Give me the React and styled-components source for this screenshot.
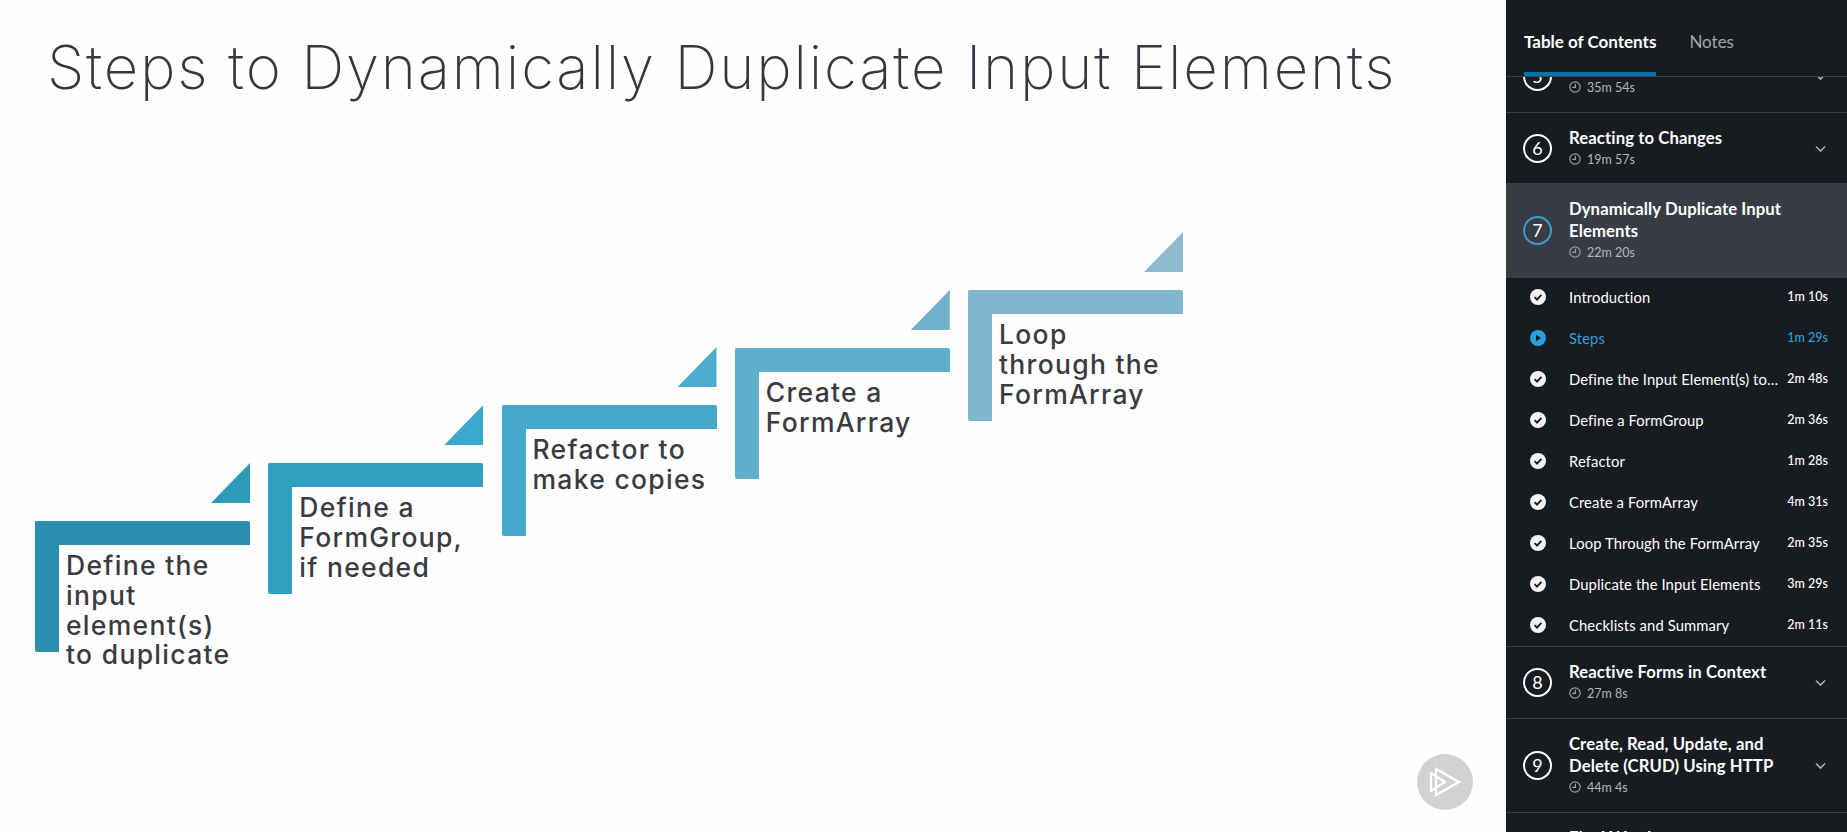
import React from 'react'
import styled, { createGlobalStyle } from 'styled-components'

const GlobalStyle = createGlobalStyle`
	html, body {
		margin: 0;
		padding: 0;
		height: 100%;
		overflow: hidden;
		background: #fff;
	}
`

const Page = styled.div`
	display: flex;
	height: 832px;
	width: 1847px;
	overflow: hidden;
	font-family: "Lato", "Liberation Sans", sans-serif;
`

const Slide = styled.main`
	flex: 1;
	position: relative;
	background: #fefefe;
	padding: 25px 0 0 47px;
`

const SlideTitle = styled.h1`
	margin: 0;
	font-family: "Inter", "Lato", sans-serif;
	font-size: 60px;
	line-height: 84px;
	font-weight: 200;
	letter-spacing: 1.8px;
	color: #33383f;
	white-space: nowrap;
`

const Stairs = styled.div`
	display: flex;
	gap: 18.25px;
	margin: 123px 0 0 -12px;
`

const Step = styled.div`
	width: 215px;
	display: flex;
	flex-direction: column;
	align-items: flex-end;
	margin-top: ${p => p.$lift}px;
`

const Corner = styled.div`
	width: 39px;
	height: 40px;
	margin-bottom: 18px;
	background: ${p => p.$color};
	clip-path: polygon(100% 0, 100% 100%, 0 100%);
`

const Bracket = styled.div`
	width: 100%;
	height: 131px;
	box-sizing: border-box;
	border-top: 24px solid ${p => p.$color};
	border-left: 24px solid ${p => p.$color};
	border-radius: 2px;
`

const StepLabel = styled.p`
	margin: 0;
	padding: 6px 0 0 7px;
	font-family: "Inter", "Lato", sans-serif;
	font-size: 26.5px;
	line-height: 29.8px;
	font-weight: 500;
	letter-spacing: 1.3px;
	color: #3a3b42;
	white-space: pre-line;
`

const PlayBadge = styled.div`
	position: absolute;
	left: 1417px;
	top: 754px;
	width: 56px;
	height: 56px;
	border-radius: 50%;
	background: #d2d2d2;
	display: flex;
	align-items: center;
	justify-content: center;
`

const Sidebar = styled.aside`
	width: 341px;
	height: 832px;
	flex: none;
	display: flex;
	flex-direction: column;
	background: #181b20;
	color: #fff;
`

const Tabs = styled.div`
	flex: none;
	height: 76px;
	display: flex;
	gap: 33px;
	padding-left: 18px;
	border-bottom: 1px solid #3c3f43;
	position: relative;
	z-index: 1;
	background: #181b20;
`

const Tab = styled.div`
	padding-top: 31px;
	height: 41px;
	font-size: 17px;
	line-height: 22px;
	font-weight: ${p => (p.$active ? 700 : 400)};
	color: ${p => (p.$active ? '#fff' : '#a3a5a8')};
	border-bottom: 4px solid ${p => (p.$active ? '#0076ad' : 'transparent')};
`

const Scroller = styled.div`
	flex: 1;
	overflow: hidden;
`

const Inner = styled.div`
	margin-top: -36px;
`

const Section = styled.div`
	display: flex;
	align-items: center;
	padding: ${p => (p.$active ? '15px 0 16px' : '14px 0 15px')};
	margin-top: ${p => (p.$active ? '-2px' : '0')};
	position: relative;
	background: ${p => (p.$active ? '#383d45' : 'transparent')};
	border-bottom: ${p => (p.$active ? 'none' : '1px solid #3c3f43')};
`

const Bullet = styled.div`
	flex: none;
	width: 29px;
	height: 29px;
	margin: 0 17px;
	box-sizing: border-box;
	border: 2.5px solid ${p => (p.$active ? '#3a9fd0' : '#fff')};
	border-radius: 50%;
	display: flex;
	align-items: center;
	justify-content: center;
	font-size: 18px;
	line-height: 1;
`

const SectionBody = styled.div`
	width: 225px;
`

const SectionTitle = styled.div`
	font-size: 16.7px;
	line-height: 22px;
	font-weight: 700;
	letter-spacing: 0.1px;
`

const Meta = styled.div`
	display: flex;
	align-items: center;
	gap: 6px;
	height: 20px;
	font-size: 12.5px;
	color: #b4b6b8;
`

const Chevron = styled.div`
	position: absolute;
	left: 309px;
	top: 50%;
	transform: translateY(-50%);
	display: flex;
`

const Lessons = styled.div`
	margin-top: -2px;
	padding-bottom: 1px;
	border-bottom: 1px solid #3c3f43;
`

const Lesson = styled.div`
	height: 41px;
	display: flex;
	align-items: center;
	padding: 0 19px 0 24px;
	color: ${p => (p.$active ? '#2a9fdb' : '#fff')};
`

const LessonIcon = styled.div`
	flex: none;
	width: 16px;
	height: 16px;
	margin-right: 23px;
	display: flex;
`

const LessonTitle = styled.div`
	flex: 1;
	min-width: 0;
	font-size: 14.8px;
	letter-spacing: 0.1px;
	white-space: nowrap;
	overflow: hidden;
	text-overflow: ellipsis;
`

const LessonTime = styled.div`
	flex: none;
	margin-left: 8px;
	font-size: 12.5px;
	font-weight: 500;
`

const ClockIcon = () => (
	<svg width="12" height="12" viewBox="0 0 12 12" fill="none" stroke="#9a9c9f" strokeWidth="1.2">
		<circle cx="6" cy="6" r="5.2" />
		<path d="M6.4 2.8V6.4H3.2" />
	</svg>
)

const CheckIcon = () => (
	<svg width="16" height="16" viewBox="0 0 16 16">
		<circle cx="8" cy="8" r="8" fill="#f4f4f4" />
		<path d="M4.6 8.2l2.4 2.4 4.4-4.8" fill="none" stroke="#181b20" strokeWidth="1.9" />
	</svg>
)

const PlayingIcon = () => (
	<svg width="16" height="16" viewBox="0 0 16 16">
		<circle cx="8" cy="8" r="8" fill="#2a9fdb" />
		<path d="M6 4.8v6.4L11 8z" fill="#181b20" />
	</svg>
)

const ChevronIcon = () => (
	<svg width="11" height="7" viewBox="0 0 11 7" fill="none" stroke="#aeb0b2" strokeWidth="1.6">
		<path d="M1 1l4.5 4.5L10 1" />
	</svg>
)

const steps = [
	{ text: 'Define the\ninput\nelement(s)\nto duplicate', lift: 231, corner: '#2d9ab8', color: '#2b90b0' },
	{ text: 'Define a\nFormGroup,\nif needed', lift: 173, corner: '#3aa8ca', color: '#319fbf' },
	{ text: 'Refactor to\nmake copies', lift: 115, corner: '#4eadcf', color: '#44a9cb' },
	{ text: 'Create a\nFormArray', lift: 58, corner: '#72b1cc', color: '#62aecd' },
	{ text: 'Loop\nthrough the\nFormArray', lift: 0, corner: '#8ebacf', color: '#82b6cd' },
]

const lessons = [
	['Introduction', '1m 10s'],
	['Steps', '1m 29s', true],
	['Define the Input Element(s) to Duplicate', '2m 48s'],
	['Define a FormGroup', '2m 36s'],
	['Refactor', '1m 28s'],
	['Create a FormArray', '4m 31s'],
	['Loop Through the FormArray', '2m 35s'],
	['Duplicate the Input Elements', '3m 29s'],
	['Checklists and Summary', '2m 11s'],
]

const CourseSection = ({ num, title, time, active }) => (
	<Section $active={active}>
		<Bullet $active={active}>{num}</Bullet>
		<SectionBody>
			<SectionTitle>{title}</SectionTitle>
			<Meta><ClockIcon />{time}</Meta>
		</SectionBody>
		{!active && <Chevron><ChevronIcon /></Chevron>}
	</Section>
)

const App = () => (
	<Page>
		<GlobalStyle />
		<Slide>
			<SlideTitle>Steps to Dynamically Duplicate Input Elements</SlideTitle>
			<Stairs>
				{steps.map(s => (
					<Step key={s.text} $lift={s.lift}>
						<Corner $color={s.corner} />
						<Bracket $color={s.color}>
							<StepLabel>{s.text}</StepLabel>
						</Bracket>
					</Step>
				))}
			</Stairs>
			<PlayBadge>
				<svg width="32" height="30" viewBox="0 0 32 30" fill="none" stroke="#fff" strokeWidth="2.2">
					<path d="M2 6v18l14-9z" />
					<path d="M7 2v26l23-13z" />
				</svg>
			</PlayBadge>
		</Slide>
		<Sidebar>
			<Tabs>
				<Tab $active>Table of Contents</Tab>
				<Tab>Notes</Tab>
			</Tabs>
			<Scroller>
				<Inner>
					<CourseSection num="5" title="Validation" time="35m 54s" />
					<CourseSection num="6" title="Reacting to Changes" time="19m 57s" />
					<CourseSection num="7" title="Dynamically Duplicate Input Elements" time="22m 20s" active />
					<Lessons>
						{lessons.map(([title, time, active]) => (
							<Lesson key={title} $active={active}>
								<LessonIcon>{active ? <PlayingIcon /> : <CheckIcon />}</LessonIcon>
								<LessonTitle>{title}</LessonTitle>
								<LessonTime>{time}</LessonTime>
							</Lesson>
						))}
					</Lessons>
					<CourseSection num="8" title="Reactive Forms in Context" time="27m 8s" />
					<CourseSection num="9" title="Create, Read, Update, and Delete (CRUD) Using HTTP" time="44m 4s" />
					<CourseSection num="10" title="Final Words" time="4m 12s" />
				</Inner>
			</Scroller>
		</Sidebar>
	</Page>
)

export default App
